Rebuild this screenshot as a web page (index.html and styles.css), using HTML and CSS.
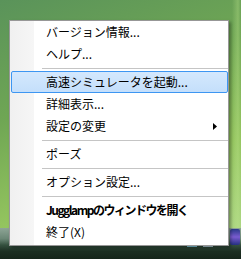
FILE: index.html
```html
<!DOCTYPE html>
<html lang="ja">
<head>
  <meta charset="UTF-8" />
  <meta name="viewport" content="width=device-width, initial-scale=1.0" />
  <title>Jugglamp メニュー</title>
  <link rel="stylesheet" href="styles.css">
</head>
<body>

  <div class="desktop">
    <div class="taskbar">
      <span class="tray-icon"></span>
      <span class="tray-icon second"></span>
      <span class="app-icon"></span>
    </div>

    <ul class="menu">
      <li class="item">バージョン情報...</li>
      <li class="item">ヘルプ...</li>
      <li class="sep"></li>
      <li class="item active">高速シミュレータを起動...</li>
      <li class="item">詳細表示...</li>
      <li class="item sub">設定の変更
        <svg class="arrow" width="4" height="7" viewBox="0 0 4 7"><polygon points="0,0 4,3.5 0,7" fill="#000"/></svg>
      </li>
      <li class="sep"></li>
      <li class="item">ポーズ</li>
      <li class="sep"></li>
      <li class="item">オプション設定...</li>
      <li class="sep"></li>
      <li class="item bold">Jugglampのウィンドウを開く</li>
      <li class="item">終了(X)</li>
    </ul>
  </div>

</body>
</html>
```

FILE: styles.css
```css
body {
  margin: 0;
  font-family: "Noto Sans CJK JP", "Noto Sans", sans-serif;
  font-size: 12px;
  color: #000;
}

.desktop {
  position: relative;
  width: 241px;
  height: 259px;
  overflow: hidden;
  background:
    linear-gradient(to right, transparent 232px, rgba(190, 230, 140, 0.35) 238px, transparent 241px),
    linear-gradient(160deg, #5a935a 0%, #6fa654 35%, #93c45e 65%, #b4dc8e 100%);
}

/* taskbar glass at the bottom */
.taskbar {
  position: absolute;
  left: 0;
  right: 0;
  bottom: 0;
  height: 31px;
  background: linear-gradient(#8ea596 0%, #6a8675 35%, #34503e 55%, #1c2f22 75%, #15251a 100%);
}

.tray-icon {
  position: absolute;
  left: 187px;
  top: 16px;
  width: 10px;
  height: 3px;
  background: #7fc4d8;
}

.tray-icon.second {
  left: 203px;
  background: #a9c3cc;
}

.app-icon {
  position: absolute;
  left: 230px;
  top: 1px;
  width: 10px;
  height: 16px;
  background: linear-gradient(#2a3a8a, #7a5cd0 50%, #243080);
  border-radius: 2px;
}

/* popup menu */
.menu {
  position: absolute;
  left: 9px;
  top: 20px;
  width: 220px;
  box-sizing: border-box;
  margin: 0;
  padding: 0 0 2px 0;
  list-style: none;
  border: 1px solid #979797;
  background: linear-gradient(to right, #f0f0f0 0, #f6f6f6 24px, #fff 24px);
  box-shadow: 2px 2px 3px rgba(0, 0, 0, 0.35);
}

.item {
  display: flex;
  align-items: center;
  justify-content: space-between;
  height: 22px;
  box-sizing: border-box;
  margin-left: 1px;
  padding: 0 10px 0 34px;
  border: 1px solid transparent;
  border-radius: 2px;
  white-space: nowrap;
  line-height: 20px;
}

.item.active {
  background: linear-gradient(#d4e8fd, #c4dffb);
  border-color: #3d96f2;
}

.item.bold {
  font-weight: bold;
  letter-spacing: -1.5px;
}

.sep {
  height: 6px;
  margin-left: 32px;
  background: linear-gradient(transparent 3px, #c5c5c5 3px, #c5c5c5 4px, transparent 4px);
}
```
